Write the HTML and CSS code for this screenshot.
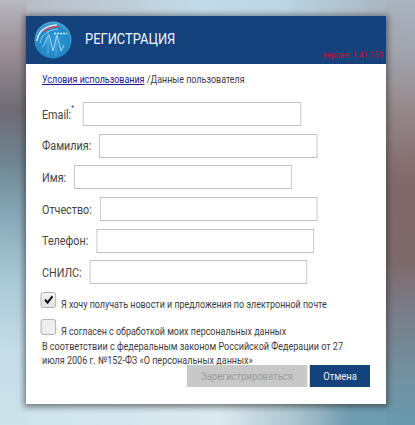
FILE: index.html
```html
<!DOCTYPE html>
<html lang="ru">
<head>
<meta charset="utf-8">
<title>Регистрация</title>
<link rel="stylesheet" href="styles.css">
</head>
<body>
<div class="modal">
  <header class="head">
    <svg class="logo" viewBox="0 0 38 38" width="38" height="38" aria-hidden="true">
      <defs>
        <radialGradient id="g" cx="50%" cy="55%" r="55%">
          <stop offset="0" stop-color="#2a9ad6"/>
          <stop offset="0.8" stop-color="#2288c8"/>
          <stop offset="1" stop-color="#5aaedc"/>
        </radialGradient>
      </defs>
      <circle cx="19" cy="19" r="18.500" fill="url(#g)"/>
      <path d="M3 20C4 11 10 5 23 4" fill="none" stroke="#dfe8f2" stroke-width="1.600"/>
      <path d="M9 11C13 7 18 5.500 25 5.500" fill="none" stroke="#d84a5a" stroke-width="1.400"/>
      <path d="M6 22C8 14 13 9 24 8" fill="none" stroke="#8fc8ea" stroke-width="1"/>
      <path d="M8 26C12 24 12 15 15 14L19 30L23 14L27 30L30 24" fill="none" stroke="#b5e0f6" stroke-width=".9"/>
      <path d="M14 10V33M22 12V35" fill="none" stroke="#8ccbec" stroke-width=".6"/>
      <path d="M20 12.500h13" fill="none" stroke="#eaf6fd" stroke-width="1.400" stroke-dasharray="2 1"/>
    </svg>
    <h1 class="title">РЕГИСТРАЦИЯ</h1>
    <span class="version">версия: 1.41.159</span>
  </header>
  <main class="content">
    <nav class="crumbs"><a href="#">Условия использования</a> /Данные пользователя</nav>
    <div class="fields">
      <label class="row">Email:<sup>*</sup><input type="text"></label>
      <label class="row">Фамилия:<input type="text"></label>
      <label class="row">Имя:<input type="text"></label>
      <label class="row">Отчество:<input type="text"></label>
      <label class="row">Телефон:<input type="text"></label>
      <label class="row">СНИЛС:<input type="text"></label>
    </div>
    <div class="check">
      <span class="box">
        <svg class="tick" viewBox="0 0 16 16" aria-hidden="true"><path d="M3.200 7.600L6.600 11L13.200 3.800" fill="none" stroke="#15181c" stroke-width="2.600"/></svg>
      </span>
      <span class="check-text">Я хочу получать новости и предложения по электронной почте</span>
    </div>
    <div class="check second">
      <span class="box empty"></span>
      <span class="check-text">Я согласен с обработкой моих персональных данных</span>
    </div>
    <p class="law">В соответствии с федеральным законом Российской Федерации от 27 июля 2006 г. №152-ФЗ «О персональных данных»</p>
    <div class="actions">
      <button class="btn disabled" type="button">Зарегистрироваться</button>
      <button class="btn primary" type="button">Отмена</button>
    </div>
  </main>
</div>
</body>
</html>
```
FILE: styles.css
```css
:root {
  --sx: .86;
  --u: calc(1px / var(--sx));
}
html, body {
  margin: 0;
  height: 425px;
  overflow: hidden;
}
body {
  font-family: Roboto, sans-serif;
  color: #444;
  background-color: #c3dbe8;
  background-image:
    linear-gradient(180deg, #b8b8bf 0, #9a8f96 50px, #6f6b74 110px, #6f8490 160px, #84a5b4 210px, #a9c8d6 280px, #c5dde7 350px, #cde3ec 425px),
    linear-gradient(180deg, #a9b4c0 0, #a0a2aa 60px, #95888a 110px, #82696a 180px, #7e6a6a 260px, #7a7c88 310px, #73909e 370px, #6a9ab0 425px),
    linear-gradient(90deg, #b8b8bf 0, #c3dbe8 200px, #bcd6e4 280px, #a9b4c0 390px),
    linear-gradient(90deg, #cde3ec 0, #d5e7ee 130px, #dce9ee 220px, #a8c2cd 300px, #6f9cb0 350px, #6a9ab0 415px);
  background-repeat: no-repeat;
  background-position: left top, right top, left top, left bottom;
  background-size: 26px 100%, 29px 100%, 100% 16px, 100% 21px;
  padding: 16px 0 0 26px;
  box-sizing: border-box;
}
.modal {
  width: 360px;
  height: 388px;
  background: #fff;
  box-shadow: 0 1px 6px 2px rgba(50,50,50,.6);
  display: flex;
  flex-direction: column;
}
.head {
  position: relative;
  height: 48px;
  flex: none;
  background: #14427c;
  display: flex;
  align-items: center;
  padding-left: 8px;
}
.logo { flex: none; margin-right: 13px; }
.title {
  margin: 0 0 3px;
  font-size: 15px;
  font-weight: 400;
  color: #f2f6fa;
  transform: scaleX(var(--sx));
  transform-origin: 0 50%;
}
.version {
  position: absolute;
  right: 3px;
  bottom: 3px;
  font-size: 9px;
  line-height: 11px;
  font-weight: 500;
  color: #a5203f;
  transform: scaleX(var(--sx));
  transform-origin: 100% 50%;
}
.content {
  box-sizing: border-box;
  flex: none;
  width: calc(360 * var(--u));
  height: 340px;
  padding: 9px calc(16 * var(--u)) 0;
  transform: scaleX(var(--sx));
  transform-origin: 0 0;
}
.crumbs {
  font-size: 10.400px;
  line-height: 13px;
  color: #3c3c3c;
}
.crumbs a { color: #1c1a8c; }
.fields {
  margin-top: 16px;
  display: flex;
  flex-direction: column;
  gap: 7.700px;
}
.row {
  display: flex;
  align-items: center;
  height: 24px;
  font-size: 12.500px;
  color: #444;
}
.row sup {
  font-size: 8px;
  align-self: flex-start;
  line-height: 10px;
  margin-top: 1px;
  margin-right: calc(1 * var(--u));
}
.row input {
  width: calc(218 * var(--u));
  height: 24px;
  box-sizing: border-box;
  margin: 0 0 0 calc(8 * var(--u));
  padding: 0;
  border: 1px solid #c0c0c0;
  background: #fff;
}
.check {
  display: flex;
  align-items: flex-end;
  margin-top: 7.500px;
  margin-left: calc(-1.500 * var(--u));
}
.check.second { margin-top: 11px; }
.box {
  box-sizing: border-box;
  width: calc(16 * var(--u));
  height: 16px;
  flex: none;
  border: 1px solid #aaa;
  border-radius: 3px;
  background: linear-gradient(#f4f4f4, #e2e2e2);
  margin-right: calc(4.500 * var(--u));
  display: flex;
  align-items: center;
  justify-content: center;
}
.tick {
  width: 100%;
  height: 100%;
}
.box.empty { background: #eee; }
.check-text {
  font-size: 10.400px;
  line-height: 13px;
  color: #3c3c3c;
  margin-bottom: -3.500px;
}
.law {
  margin: 5px 0 0;
  font-size: 10.500px;
  line-height: 14px;
  color: #3c3c3c;
  width: calc(310 * var(--u));
}
.actions {
  display: flex;
  justify-content: flex-end;
  gap: calc(3 * var(--u));
  margin-top: -2.500px;
}
.btn {
  height: 22px;
  border: 0;
  padding: 0;
  font-family: inherit;
  font-size: 11px;
}
.disabled {
  width: calc(120 * var(--u));
  background: #c8c8c8;
  color: #9a9a9a;
}
.primary {
  width: calc(60 * var(--u));
  background: #14427c;
  color: #f0f4f8;
}
```
